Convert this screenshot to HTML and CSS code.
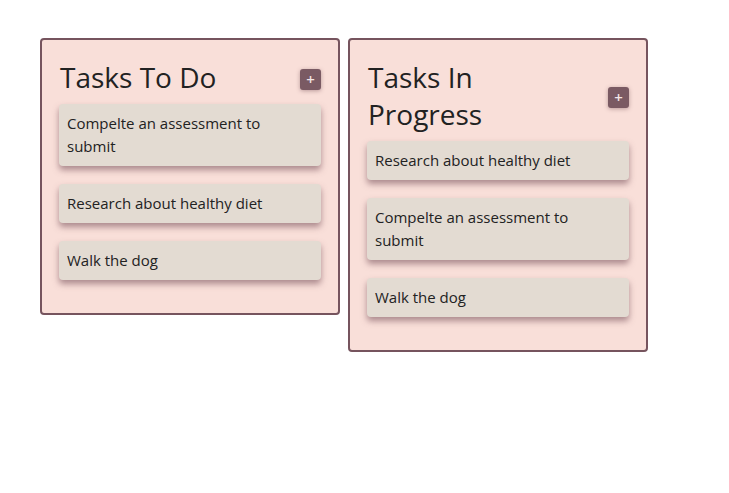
FILE: index.html
```html
<!DOCTYPE html>
<html>
<head>
<meta charset="utf-8">
<link rel="stylesheet" href="styles.css">
</head>
<body>
<div class="board">
  <section class="column">
    <div class="column-head">
      <h2 class="column-title">Tasks To Do</h2>
      <button class="add-btn">+</button>
    </div>
    <div class="task">Compelte an assessment to submit</div>
    <div class="task">Research about healthy diet</div>
    <div class="task">Walk the dog</div>
  </section>
  <section class="column">
    <div class="column-head">
      <h2 class="column-title">Tasks In Progress</h2>
      <button class="add-btn">+</button>
    </div>
    <div class="task">Research about healthy diet</div>
    <div class="task">Compelte an assessment to submit</div>
    <div class="task">Walk the dog</div>
  </section>
</div>
</body>
</html>
```

FILE: styles.css
```css
html, body {
  margin: 0;
  padding: 0;
  background: #ffffff;
}
body {
  font-family: "Open Sans", "Noto Sans", sans-serif;
  color: #222222;
}
.board {
  display: flex;
  align-items: flex-start;
  gap: 8px;
  padding: 38px 0 0 40px;
}
.column {
  background: #f9dfd9;
  border: 2px solid #76545e;
  border-radius: 4px;
  padding: 0 17px 33px;
  box-sizing: border-box;
  width: 300px;
  display: flex;
  flex-direction: column;
  gap: 18px;
}
.column-head {
  display: flex;
  align-items: center;
  justify-content: space-between;
  padding-top: 19px;
  padding-left: 1px;
  margin-bottom: -10px;
}
.column-title {
  margin: 0;
  font-weight: 400;
  font-size: 28px;
  line-height: 37px;
  width: 200px;
}
.add-btn {
  width: 21px;
  height: 21px;
  margin-top: 3px;
  padding: 0;
  border: none;
  border-radius: 3px;
  background: #7a5a63;
  color: #f4e6e6;
  font-family: inherit;
  font-size: 15px;
  font-weight: 600;
  line-height: 21px;
  box-shadow: 0 1px 4px rgba(90, 50, 60, 0.4);
}
.task {
  background: #e3dbd2;
  border-radius: 4px;
  padding: 8px 14px 8px 8px;
  font-size: 15px;
  line-height: 23px;
  box-shadow: 0 4px 6px rgba(110, 70, 80, 0.55);
}
```
